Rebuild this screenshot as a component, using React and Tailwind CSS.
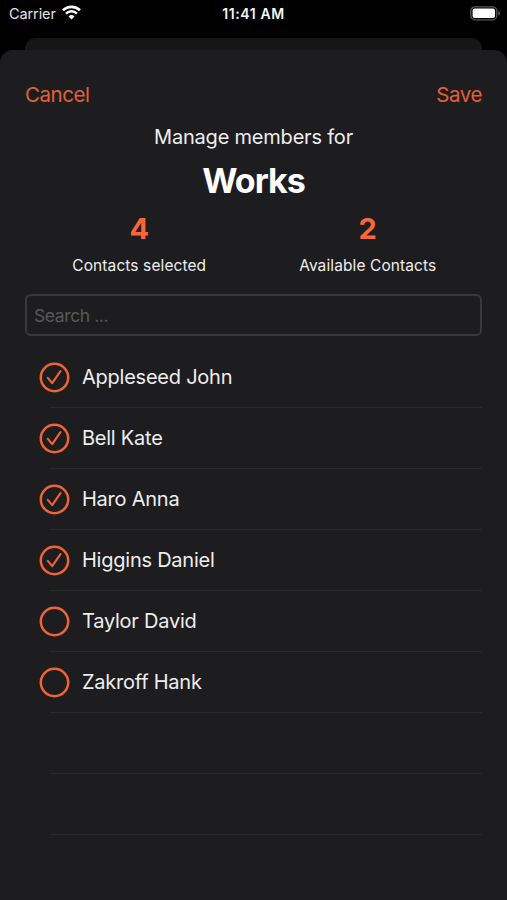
import { useState } from "react";

const initialContacts = [
  { name: "Appleseed John", selected: true },
  { name: "Bell Kate", selected: true },
  { name: "Haro Anna", selected: true },
  { name: "Higgins Daniel", selected: true },
  { name: "Taylor David", selected: false },
  { name: "Zakroff Hank", selected: false },
];

function WifiIcon() {
  return (
    <svg width="19" height="15" viewBox="0 0 19 15" fill="none" aria-hidden="true">
      <path d="M1 5.3a12.1 12.1 0 0 1 17 0" stroke="#fff" strokeWidth="2.7" />
      <path d="M4 8.6a7.9 7.9 0 0 1 11 0" stroke="#fff" strokeWidth="2.5" />
      <path d="M9.5 14.4 6.5 11.4a4.3 4.3 0 0 1 6 0z" fill="#fff" />
    </svg>
  );
}

function BatteryIcon() {
  return (
    <svg width="31" height="15" viewBox="0 0 31 15" fill="none" aria-hidden="true">
      <rect x="0.8" y="0.8" width="26" height="13" rx="4" stroke="#58585a" strokeWidth="1.3" />
      <rect x="2.6" y="2.6" width="22.4" height="9.4" rx="2" fill="#fff" />
      <path d="M28.3 5v4.6c1.2-.4 1.9-1.3 1.9-2.3s-.7-1.9-1.9-2.3z" fill="#58585a" />
    </svg>
  );
}

function StatusBar() {
  return (
    <div className="grid h-[38px] grid-cols-3 pt-[5px] text-[14.5px] leading-[18px] text-[#e4e4e4]">
      <div className="flex gap-[6px] pl-[9px]">
        <span className="tracking-[-0.1px]">Carrier</span>
        <WifiIcon />
      </div>
      <div className="text-center text-[14px] font-semibold tracking-[0.6px] whitespace-nowrap text-[#f4f4f4]">
        11:41 AM
      </div>
      <div className="flex justify-end pt-[1px] pr-[6px]">
        <BatteryIcon />
      </div>
    </div>
  );
}

function Stat({ value, label }) {
  return (
    <div className="text-center">
      <div className="text-[29px] leading-[36px] font-bold text-[#fc6538]">{value}</div>
      <div className="mt-[9px] text-[15.5px] leading-[20px] tracking-[0.1px]">{label}</div>
    </div>
  );
}

function CheckCircle({ checked }) {
  return (
    <svg
      width="31"
      height="31"
      viewBox="0 0 31 31"
      fill="none"
      stroke="#ee6337"
      strokeLinecap="round"
      strokeLinejoin="round"
      aria-hidden="true"
    >
      <circle cx="15.5" cy="15.5" r="13.7" strokeWidth="2.5" />
      {checked ? <path d="M8.8 15.8l4.4 5.4 8.3-12.1" strokeWidth="2.1" /> : null}
    </svg>
  );
}

function ContactRow({ contact, onToggle }) {
  return (
    <div className="h-[61px]">
      <button
        type="button"
        onClick={onToggle}
        className="flex h-[60px] w-full items-center gap-[12px] pl-[14px] text-left"
      >
        <CheckCircle checked={contact.selected} />
        <span className="text-[20px] leading-[28px] tracking-[-0.24px] text-[#eeeeee]">
          {contact.name}
        </span>
      </button>
      <div className="ml-[25px] h-px bg-[#29292b]" />
    </div>
  );
}

export default function App() {
  const [contacts, setContacts] = useState(initialContacts);
  const [query, setQuery] = useState("");

  const selectedCount = contacts.filter((c) => c.selected).length;
  const visible = contacts.filter((c) =>
    c.name.toLowerCase().includes(query.toLowerCase())
  );

  const toggle = (name) => {
    setContacts((prev) =>
      prev.map((c) => (c.name === name ? { ...c, selected: !c.selected } : c))
    );
  };

  return (
    <div className="flex h-[900px] w-[507px] flex-col overflow-hidden bg-black font-['Inter','Liberation_Sans',sans-serif]">
      <StatusBar />
      <div className="mx-[25px] h-[12px] shrink-0 rounded-t-[11px] bg-[#161616]" />

      <div className="flex-1 rounded-t-[13px] bg-[#1d1d1f] px-[25px] text-[#eeeeee]">
        <div className="flex justify-between pt-[31px] text-[20.5px] leading-[28px] tracking-[-0.45px] text-[#e26039]">
          <button type="button">Cancel</button>
          <button type="button">Save</button>
        </div>

        <div className="mt-[14px] text-center text-[20px] leading-[28px] tracking-[-0.2px]">
          Manage members for
        </div>
        <h1 className="mt-[9px] text-center text-[34px] leading-[42px] font-bold tracking-[-1px] text-white">
          Works
        </h1>

        <div className="mt-[9px] grid grid-cols-2">
          <Stat value={selectedCount} label="Contacts selected" />
          <Stat value={contacts.length - selectedCount} label="Available Contacts" />
        </div>

        <input
          value={query}
          onChange={(e) => setQuery(e.target.value)}
          placeholder="Search ..."
          className="mt-[18px] block h-[42px] w-full rounded-[6px] border-2 border-[#39393b] bg-transparent px-[7px] text-[17.5px] tracking-[-0.4px] outline-none placeholder:text-[#58585a]"
        />

        <div className="mt-[11px]">
          {visible.map((c) => (
            <ContactRow key={c.name} contact={c} onToggle={() => toggle(c.name)} />
          ))}
          {[0, 1].map((i) => (
            <div key={i} className="ml-[25px] h-[61px] border-b border-[#29292b]" />
          ))}
        </div>
      </div>
    </div>
  );
}
